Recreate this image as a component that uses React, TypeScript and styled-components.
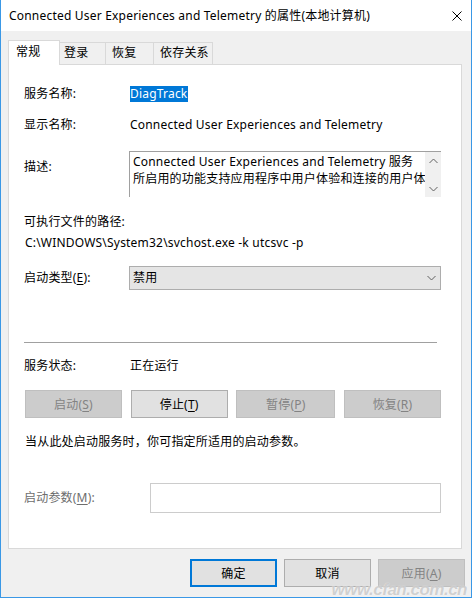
import React from "react";
import styled, { createGlobalStyle } from "styled-components";

const Global = createGlobalStyle`
  html, body { margin: 0; padding: 0; background: #ffffff; }
  body {
    font-family: "Segoe UI", "Noto Sans", "Noto Sans CJK SC", sans-serif;
    font-size: 12px;
    letter-spacing: 0.2px;
    color: #000000;
  }
  * { box-sizing: border-box; }
`;

const Window = styled.div`
  position: relative;
  width: 472px;
  height: 598px;
  background: #f0f0f0;
  border-left: 1px solid #3a98e6;
  border-right: 1px solid #3a98e6;
  border-bottom: 1px solid #3a98e6;
  display: flex;
  flex-direction: column;
  overflow: hidden;
`;

const TitleBar = styled.div`
  height: 31px;
  flex: none;
  background: #ffffff;
  display: flex;
  align-items: center;
  justify-content: space-between;
  padding: 0 9px 0 8px;
`;

const Title = styled.div`
  line-height: 16px;
  white-space: nowrap;
`;

const CloseIcon = styled.svg`
  width: 10px;
  height: 10px;
  display: block;
`;

const TabStrip = styled.div`
  display: flex;
  align-items: flex-end;
  margin: 9px 0 0 7px;
  height: 24px;
  flex: none;
  position: relative;
  z-index: 1;
`;

const Tab = styled.div<{ $active?: boolean; $w: number; $pl: number }>`
  width: ${(p) => p.$w}px;
  padding-left: ${(p) => p.$pl}px;
  height: ${(p) => (p.$active ? 25 : 22)}px;
  margin-bottom: ${(p) => (p.$active ? -1 : 0)}px;
  background: ${(p) => (p.$active ? "#ffffff" : "#f0f0f0")};
  border: 1px solid #d9d9d9;
  border-bottom: none;
  border-left: ${(p) => (p.$active ? "1px solid #d9d9d9" : "none")};
  line-height: ${(p) => (p.$active ? 22 : 20)}px;
  white-space: nowrap;
`;

const Panel = styled.div`
  height: 485px;
  flex: none;
  margin: 0 9px 0 7px;
  background: #ffffff;
  border: 1px solid #d9d9d9;
  padding: 0 20px 0 15px;
  display: flex;
  flex-direction: column;
`;

const Row = styled.div<{ $mt: number; $col?: number; $top?: boolean }>`
  margin-top: ${(p) => p.$mt}px;
  display: grid;
  grid-template-columns: ${(p) => p.$col ?? 106}px 1fr;
  align-items: ${(p) => (p.$top ? "start" : "center")};
  line-height: 16px;
  white-space: nowrap;
`;

const Line = styled.div<{ $mt: number; $ml?: number }>`
  margin-top: ${(p) => p.$mt}px;
  margin-left: ${(p) => p.$ml ?? 0}px;
  line-height: 16px;
  white-space: nowrap;
`;

const Label = styled.div<{ $mt?: number; $disabled?: boolean }>`
  margin-top: ${(p) => p.$mt ?? 0}px;
  color: ${(p) => (p.$disabled ? "#6d6d6d" : "#000000")};
`;

const Selected = styled.span`
  display: inline-block;
  background: #0078d7;
  color: #ffffff;
  padding: 0 1px 0 0;
  height: 16px;
`;

const DescBox = styled.div`
  margin-left: -1px;
  height: 46px;
  border-top: 1px solid #a0a0a0;
  border-left: 1px solid #a0a0a0;
  display: flex;
  overflow: hidden;
`;

const DescText = styled.div`
  flex: 1;
  padding: 1px 0 0 3px;
  line-height: 17px;
  overflow: hidden;
`;

const ScrollBar = styled.div`
  width: 16px;
  flex: none;
  background: #f0f0f0;
  display: flex;
  flex-direction: column;
  align-items: center;
  justify-content: space-between;
  padding: 6px 0 5px;
`;

const Chevron = styled.svg<{ $mr?: number }>`
  width: 9px;
  height: 6px;
  display: block;
  margin-right: ${(p) => p.$mr ?? 0}px;
`;

const Select = styled.div`
  margin-left: -1px;
  height: 24px;
  background: #e5e5e5;
  border: 1px solid #adadad;
  display: flex;
  align-items: center;
  justify-content: space-between;
  padding: 0 3px 0 3px;
`;

const Separator = styled.div`
  margin: 52px 4px 0 0;
  height: 1px;
  background: #a0a0a0;
  flex: none;
`;

const ButtonRow = styled.div`
  margin: 16px 0 0 1px;
  display: grid;
  grid-template-columns: 97px 97px 99px 97px;
  justify-content: space-between;
`;

const Button = styled.div<{ $disabled?: boolean; $primary?: boolean; $w?: number }>`
  height: 28px;
  ${(p) => (p.$w ? `width: ${p.$w}px;` : "")}
  background: ${(p) => (p.$disabled ? "#cccccc" : "#e1e1e1")};
  border: ${(p) =>
    p.$primary ? "2px solid #0078d7" : p.$disabled ? "1px solid #bfbfbf" : "1px solid #adadad"};
  color: ${(p) => (p.$disabled ? "#838383" : "#000000")};
  display: flex;
  align-items: center;
  justify-content: center;
  white-space: nowrap;
`;

const Input = styled.div`
  height: 30px;
  border: 1px solid #cccccc;
  background: #ffffff;
`;

const Footer = styled.div`
  display: flex;
  justify-content: flex-end;
  gap: 7px;
  padding: 10px 6px 0 0;
`;

const U = styled.span`
  text-decoration: underline;
  text-underline-offset: 2px;
`;

const Watermark = styled.div`
  position: absolute;
  right: 4px;
  bottom: -3px;
  font-family: "Liberation Sans", Arial, sans-serif;
  font-style: italic;
  font-weight: bold;
  font-size: 17px;
  letter-spacing: -0.5px;
  color: rgba(170, 170, 170, 0.55);
  text-shadow: 0 0 1px rgba(255, 255, 255, 0.9);
  pointer-events: none;
`;

const Up = () => (
  <Chevron viewBox="0 0 9 6">
    <polyline points="0.5,5 4.5,1 8.5,5" fill="none" stroke="#606060" strokeWidth="1" />
  </Chevron>
);
const Down = ({ mr }: { mr?: number }) => (
  <Chevron viewBox="0 0 9 6" $mr={mr}>
    <polyline points="0.5,1 4.5,5 8.5,1" fill="none" stroke="#606060" strokeWidth="1" />
  </Chevron>
);

export default function App() {
  return (
    <>
      <Global />
      <Window>
        <TitleBar>
          <Title>Connected User Experiences and Telemetry 的属性(本地计算机)</Title>
          <CloseIcon viewBox="0 0 10 10">
            <path d="M0.5 0.5 L9.5 9.5 M9.5 0.5 L0.5 9.5" stroke="#000" strokeWidth="1" />
          </CloseIcon>
        </TitleBar>
        <TabStrip>
          <Tab $active $w={52} $pl={7}>常规</Tab>
          <Tab $w={46} $pl={4}>登录</Tab>
          <Tab $w={48} $pl={6}>恢复</Tab>
          <Tab $w={59} $pl={6}>依存关系</Tab>
        </TabStrip>
        <Panel>
          <Row $mt={21}>
            <Label>服务名称:</Label>
            <div>
              <Selected>DiagTrack</Selected>
            </div>
          </Row>
          <Row $mt={15}>
            <Label>显示名称:</Label>
            <div>Connected User Experiences and Telemetry</div>
          </Row>
          <Row $mt={18} $top>
            <Label $mt={8}>描述:</Label>
            <DescBox>
              <DescText>
                Connected User Experiences and Telemetry 服务
                <br />
                所启用的功能支持应用程序中用户体验和连接的用户体
              </DescText>
              <ScrollBar>
                <Up />
                <Down />
              </ScrollBar>
            </DescBox>
          </Row>
          <Line $mt={17}>可执行文件的路径:</Line>
          <Line $mt={5} $ml={1}>C:\WINDOWS\System32\svchost.exe -k utcsvc -p</Line>
          <Row $mt={15}>
            <Label>
              启动类型(<U>E</U>):
            </Label>
            <Select>
              <span>禁用</span>
              <Down mr={1} />
            </Select>
          </Row>
          <Separator />
          <Row $mt={15}>
            <Label>服务状态:</Label>
            <div>正在运行</div>
          </Row>
          <ButtonRow>
            <Button $disabled>
              启动(<U>S</U>)
            </Button>
            <Button>
              停止(<U>T</U>)
            </Button>
            <Button $disabled>
              暂停(<U>P</U>)
            </Button>
            <Button $disabled>
              恢复(<U>R</U>)
            </Button>
          </ButtonRow>
          <Line $mt={16} $ml={1}>当从此处启动服务时，你可指定所适用的启动参数。</Line>
          <Row $mt={33} $col={126}>
            <Label $disabled>
              启动参数(<U>M</U>):
            </Label>
            <Input />
          </Row>
        </Panel>
        <Footer>
          <Button $primary $w={87}>确定</Button>
          <Button $w={87}>取消</Button>
          <Button $disabled $w={87}>
            应用(<U>A</U>)
          </Button>
        </Footer>
        <Watermark>www.cfan.com.cn</Watermark>
      </Window>
    </>
  );
}
